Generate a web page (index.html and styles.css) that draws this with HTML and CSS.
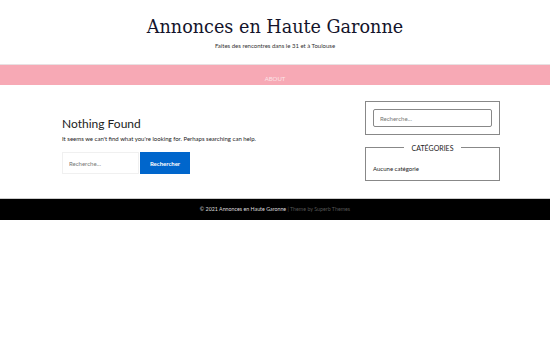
FILE: index.html
```html
<!DOCTYPE html>
<html lang="fr">
<head>
  <meta charset="UTF-8">
  <meta name="viewport" content="width=device-width, initial-scale=1.0">
  <title>Annonces en Haute Garonne</title>
  <link rel="stylesheet" href="styles.css">
</head>
<body>

<header class="site-header">
  <h1 class="site-title">Annonces en Haute Garonne</h1>
  <p class="site-desc">Faites des rencontres dans le 31 et à Toulouse</p>
</header>

<nav class="main-nav">
  <a href="#">About</a>
</nav>

<div class="content">
  <main class="primary">
    <h2>Nothing Found</h2>
    <p>It seems we can't find what you're looking for. Perhaps searching can help.</p>
    <form class="search-form">
      <input type="search" placeholder="Recherche…">
      <button type="button">Rechercher</button>
    </form>
  </main>

  <aside class="sidebar">
    <div class="widget">
      <input class="widget-search" type="search" placeholder="Recherche…">
    </div>
    <div class="widget widget-cats">
      <h3 class="widget-title"><span>Catégories</span></h3>
      <p>Aucune catégorie</p>
    </div>
  </aside>
</div>

<footer class="site-footer">
  © 2021 Annonces en Haute Garonne <span class="credit">| Theme by Superb Themes</span>
</footer>

</body>
</html>
```

FILE: styles.css
```css
body {
  margin: 0;
  font-family: Lato, sans-serif;
  color: #222;
  background: #fff;
}
.site-header {
  text-align: center;
  padding: 14px 0 0;
}
.site-title {
  font-family: "DejaVu Serif", serif;
  font-weight: 400;
  font-size: 17.6px;
  color: #14142b;
  margin: 0;
  line-height: 26px;
}
.site-desc {
  font-size: 6px;
  margin: 2px 0 0;
  color: #333;
  line-height: 8px;
}
.main-nav {
  background: #f7a9b5;
  border-top: 1px solid #e8e0e2;
  text-align: center;
  height: 20px;
  line-height: 20px;
  margin-top: 14px;
}
.main-nav a {
  color: #fbe3e7;
  font-size: 6px;
  text-transform: uppercase;
  text-decoration: none;
}
.content {
  display: flex;
  justify-content: space-between;
  padding: 16px 50px 17px 62px;
}
.primary {
  padding-top: 15px;
}
.primary h2 {
  font-weight: 400;
  font-size: 12px;
  margin: 0;
  line-height: 16px;
  color: #222;
}
.primary p {
  font-size: 6px;
  margin: 3px 0 0;
}
.search-form {
  display: flex;
  margin-top: 10px;
}
.search-form input {
  width: 77px;
  height: 22px;
  box-sizing: border-box;
  border: 1px solid #f0f0f0;
  padding: 0 6px;
  font-family: Lato, sans-serif;
  font-size: 6px;
  outline: none;
}
.search-form button {
  width: 50px;
  height: 22px;
  margin-left: 1px;
  border: none;
  background: #0066cc;
  color: #fff;
  font-family: Lato, sans-serif;
  font-size: 6px;
  font-weight: 700;
}
.sidebar {
  width: 135px;
  display: flex;
  flex-direction: column;
  gap: 12px;
}
.widget {
  border: 1px solid #888;
  padding: 7px;
}
.widget-search {
  display: block;
  width: 100%;
  height: 18px;
  box-sizing: border-box;
  border: 1px solid #888;
  border-radius: 2px;
  padding: 0 6px;
  font-family: Lato, sans-serif;
  font-size: 6px;
}
.widget-cats {
  padding-top: 0;
  padding-bottom: 8px;
}
.widget-title {
  font-weight: 400;
  font-size: 7px;
  text-transform: uppercase;
  text-align: center;
  margin: -5px 0 12px;
  line-height: 10px;
}
.widget-title span {
  background: #fff;
  padding: 0 8px;
}
.widget-cats p {
  font-size: 6px;
  margin: 0;
}
.site-footer {
  background: #000;
  color: #ddd;
  text-align: center;
  font-size: 5.3px;
  height: 21px;
  line-height: 21px;
  border-top: 1px solid #ccc;
}
.credit {
  color: #555;
}
```
